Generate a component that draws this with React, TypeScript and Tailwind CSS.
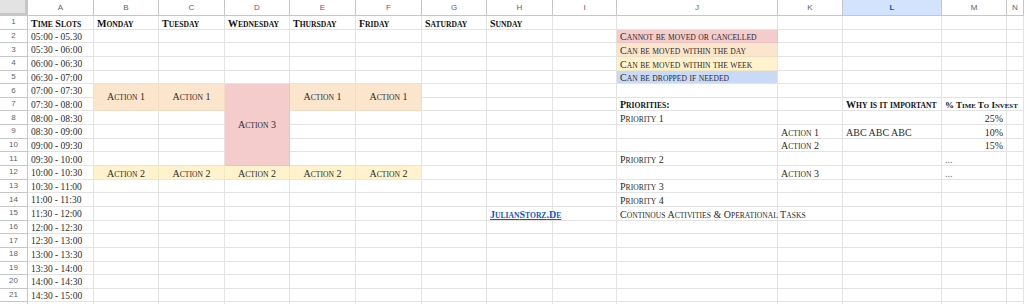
import type { ReactNode } from "react";

type Spec = {
  text?: string;
  cls?: string;
  span?: string;
  mid?: boolean;
  link?: boolean;
  plain?: boolean;
};

const COLS = ["A", "B", "C", "D", "E", "F", "G", "H", "I", "J", "K", "L", "M", "N"];
const ROWS = 22;

const times = [
  "05:00 - 05.30", "05:30 - 06:00", "06:00 - 06:30", "06:30 - 07:00", "07:00 - 07:30",
  "07:30 - 08:00", "08:00 - 08:30", "08:30 - 09:00", "09:00 - 09:30", "09:30 - 10:00",
  "10:00 - 10:30", "10:30 - 11:00", "11:00 - 11:30", "11:30 - 12:00", "12:00 - 12:30",
  "12:30 - 13:00", "13:00 - 13:30", "13:30 - 14:00", "14:00 - 14:30", "14:30 - 15:00",
];

const bold = "font-bold text-[#111]";
const orange = "bg-[#fce5cd] border-[#f2dcc4]";
const yellow = "bg-[#fff2cc] border-[#f3e7c2]";
const pink = "bg-[#f4cccc] border-[#e9c3c3]";
const blue = "bg-[#c9daf8] border-[#bfd0ee]";

const cells: Record<string, Spec> = {
  A1: { text: "Time Slots", cls: bold },
  B1: { text: "Monday", cls: bold },
  C1: { text: "Tuesday", cls: bold },
  D1: { text: "Wednesday", cls: bold },
  E1: { text: "Thursday", cls: bold },
  F1: { text: "Friday", cls: bold },
  G1: { text: "Saturday", cls: bold },
  H1: { text: "Sunday", cls: bold },

  J2: { text: "Cannot be moved or cancelled", cls: pink },
  J3: { text: "Can be moved within the day", cls: orange },
  J4: { text: "Can be moved within the week", cls: yellow },
  J5: { text: "Can be dropped if needed", cls: blue },

  B6: { text: "Action 1", cls: `${orange} justify-center`, span: "row-span-2", mid: true },
  C6: { text: "Action 1", cls: `${orange} justify-center`, span: "row-span-2", mid: true },
  D6: { text: "Action 3", cls: `${pink} justify-center`, span: "row-span-6", mid: true },
  E6: { text: "Action 1", cls: `${orange} justify-center`, span: "row-span-2", mid: true },
  F6: { text: "Action 1", cls: `${orange} justify-center`, span: "row-span-2", mid: true },

  J7: { text: "Priorities:", cls: bold },
  L7: { text: "Why is it important", cls: bold },
  M7: { text: "% Time To Invest", cls: `${bold} text-[9px] relative z-10` },

  J8: { text: "Priority 1" },
  M8: { text: "25%", cls: "justify-end" },
  K9: { text: "Action 1" },
  L9: { text: "ABC ABC ABC" },
  M9: { text: "10%", cls: "justify-end" },
  K10: { text: "Action 2" },
  M10: { text: "15%", cls: "justify-end" },
  J11: { text: "Priority 2" },
  M11: { text: "...", cls: "text-[#777]" },

  B12: { text: "Action 2", cls: `${yellow} justify-center` },
  C12: { text: "Action 2", cls: `${yellow} justify-center` },
  D12: { text: "Action 2", cls: `${yellow} justify-center` },
  E12: { text: "Action 2", cls: `${yellow} justify-center` },
  F12: { text: "Action 2", cls: `${yellow} justify-center` },
  K12: { text: "Action 3" },
  M12: { text: "...", cls: "text-[#777]" },

  J13: { text: "Priority 3" },
  J14: { text: "Priority 4" },
  H15: { text: "JulianStorz.De", cls: "font-bold text-[#1155cc]", link: true },
  J15: { text: "Continous Activities & Operational Tasks", cls: "relative z-10" },
};

times.forEach((t, i) => {
  cells[`A${i + 2}`] = { text: t, cls: "text-[9.5px]", plain: true };
});

const covered = new Set(["B7", "C7", "E7", "F7", "D7", "D8", "D9", "D10", "D11"]);

// small caps by hand: lowercase runs become uppercase at a smaller size
function SC({ text, className = "" }: { text: string; className?: string }) {
  const parts: { s: string; small: boolean }[] = [];
  for (const ch of text) {
    const small = /[a-z]/.test(ch);
    const last = parts[parts.length - 1];
    if (last && last.small === small) last.s += ch;
    else parts.push({ s: ch, small });
  }
  return (
    <span className={className}>
      {parts.map((p, i) =>
        p.small ? (
          <span key={i} className="uppercase text-[0.76em]">
            {p.s}
          </span>
        ) : (
          <span key={i}>{p.s}</span>
        )
      )}
    </span>
  );
}

const headCls =
  "bg-white border-r border-b border-[#c4c7c5] flex items-center justify-center font-['Liberation_Sans',sans-serif] text-[8px] text-[#5f6368]";

export default function App() {
  const grid: ReactNode[] = [];

  grid.push(<div key="corner" className="bg-[#e3e3e3] border-r-[3px] border-b-[3px] border-[#c6c6c6]" />);
  COLS.forEach((c) => {
    grid.push(
      <div
        key={`h-${c}`}
        className={
          c === "L"
            ? "bg-[#d3e3fd] border-r border-b border-[#c4c7c5] flex items-center justify-center font-['Liberation_Sans',sans-serif] text-[8px] font-bold text-[#0b57d0]"
            : headCls
        }
      >
        {c}
      </div>
    );
  });

  for (let r = 1; r <= ROWS; r++) {
    // the last row is only a sliver at the bottom edge, its number falls outside
    grid.push(
      <div key={`r-${r}`} className={headCls}>
        {r < ROWS ? r : ""}
      </div>
    );
    COLS.forEach((c) => {
      const key = `${c}${r}`;
      if (covered.has(key)) return;
      const spec = cells[key];
      let content: ReactNode = null;
      if (spec?.text) {
        content = spec.plain ? (
          <span>{spec.text}</span>
        ) : (
          <SC text={spec.text} className={spec.link ? "underline decoration-[#1155cc]" : ""} />
        );
      }
      grid.push(
        <div
          key={key}
          className={`${spec?.span ?? ""} ${spec?.mid ? "items-center" : "items-end"} flex px-[3px] border-r border-b border-[#e3e3e3] whitespace-nowrap overflow-visible min-w-0 ${spec?.cls ?? ""}`}
        >
          {content}
        </div>
      );
    });
  }

  return (
    <div className="w-[1024px] h-[304px] overflow-hidden bg-white font-['Liberation_Serif',serif] text-[10px] leading-none text-[#2b2b2b]">
      <div className="grid grid-cols-[28px_66px_65px_66px_65px_66px_66px_65px_66px_64px_161px_65px_99px_65px_17px] grid-rows-[16px_repeat(22,13.65px)]">
        {grid}
      </div>
    </div>
  );
}
